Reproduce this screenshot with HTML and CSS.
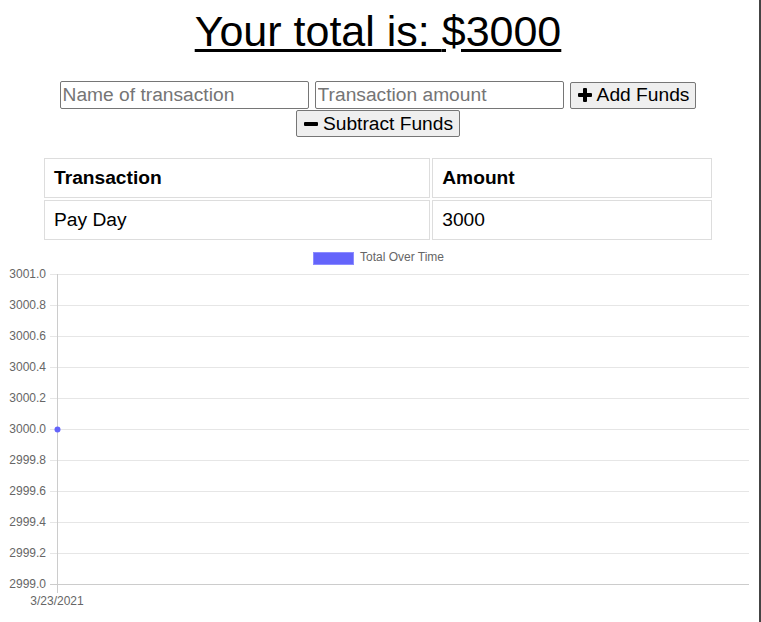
FILE: index.html
```html
<!DOCTYPE html>
<html lang="en">
<head>
<meta charset="utf-8">
<title>Budget Tracker</title>
<link rel="stylesheet" href="styles.css">
</head>
<body>
<h1 class="total"><span class="u">Your total is: </span><span class="dollar">$</span><span class="u">3000</span></h1>
<div class="form">
  <input class="field" type="text" placeholder="Name of transaction">
  <input class="field" type="number" placeholder="Transaction amount">
  <button class="btn" type="button"><svg class="icon" viewBox="0 0 16 16" aria-hidden="true"><rect x="6" y="1" width="4" height="14" rx="1"/><rect x="1" y="6" width="14" height="4" rx="1"/></svg>Add Funds</button>
  <button class="btn" type="button"><svg class="icon" viewBox="0 0 16 16" aria-hidden="true"><rect x="1" y="6" width="14" height="4" rx="1"/></svg>Subtract Funds</button>
</div>
<table class="ledger">
  <thead>
    <tr><th class="col-name">Transaction</th><th>Amount</th></tr>
  </thead>
  <tbody>
    <tr><td>Pay Day</td><td>3000</td></tr>
  </tbody>
</table>
<svg class="chart" width="744" height="372" viewBox="0 0 744 372">
  <g class="legend">
    <rect x="305.5" y="7.5" width="40" height="12" fill="#6464fb" stroke="#8c8cff"/>
    <text x="352" y="15.5" class="lbl">Total Over Time</text>
  </g>
  <g class="grid">
    <line x1="42" x2="742" y1="29.5" y2="29.5"/>
    <line x1="42" x2="742" y1="60.5" y2="60.5"/>
    <line x1="42" x2="742" y1="91.5" y2="91.5"/>
    <line x1="42" x2="742" y1="122.5" y2="122.5"/>
    <line x1="42" x2="742" y1="153.5" y2="153.5"/>
    <line x1="42" x2="742" y1="184.5" y2="184.5"/>
    <line x1="42" x2="742" y1="215.5" y2="215.5"/>
    <line x1="42" x2="742" y1="246.5" y2="246.5"/>
    <line x1="42" x2="742" y1="277.5" y2="277.5"/>
    <line x1="42" x2="742" y1="308.5" y2="308.5"/>
  </g>
  <line class="axis" x1="42" x2="742" y1="339.5" y2="339.5"/>
  <line class="axis" x1="49.5" x2="49.5" y1="29" y2="348"/>
  <g class="ylabels">
    <text x="38" y="33">3001.0</text>
    <text x="38" y="64">3000.8</text>
    <text x="38" y="95">3000.6</text>
    <text x="38" y="126">3000.4</text>
    <text x="38" y="157">3000.2</text>
    <text x="38" y="188">3000.0</text>
    <text x="38" y="219">2999.8</text>
    <text x="38" y="250">2999.6</text>
    <text x="38" y="281">2999.4</text>
    <text x="38" y="312">2999.2</text>
    <text x="38" y="343">2999.0</text>
  </g>
  <text x="49" y="360" class="lbl xlabel">3/23/2021</text>
  <circle cx="49.5" cy="184.5" r="3" fill="#6464fb"/>
</svg>
</body>
</html>
```
FILE: styles.css
```css
html {
  border-right: 2px solid #444;
  overflow: hidden;
  height: 100%;
  box-sizing: border-box;
}
body {
  margin: 0 10px 0 7px;
  font-family: "Liberation Sans", Arial, sans-serif;
  color: #000;
}
.total {
  margin: 7px 0 25px;
  font-size: 43px;
  line-height: 49px;
  font-weight: normal;
  text-align: center;
}
.total .u {
  text-decoration: underline;
  text-decoration-thickness: 3px;
  text-underline-offset: 3px;
}
.total .dollar {
  background-image: linear-gradient(#000, #000), linear-gradient(#000, #000);
  background-size: 4px 3px, 5px 3px;
  background-position: 0 42px, 100% 42px;
  background-repeat: no-repeat;
}
.form {
  display: flex;
  flex-wrap: wrap;
  justify-content: center;
  align-items: center;
  column-gap: 6px;
  row-gap: 1px;
}
.field {
  box-sizing: border-box;
  width: 249px;
  height: 28px;
  margin: 0;
  padding: 1px 2px;
  border: 1px solid #767676;
  border-radius: 2px;
  font-family: "Liberation Sans", Arial, sans-serif;
  font-size: 19.2px;
  color: #000;
  -moz-appearance: textfield;
}
.field::placeholder {
  color: #757575;
}
.field::-webkit-outer-spin-button,
.field::-webkit-inner-spin-button {
  -webkit-appearance: none;
  margin: 0;
}
.btn {
  box-sizing: border-box;
  height: 27px;
  margin: 0;
  padding: 0 6px;
  display: inline-flex;
  align-items: center;
  border: 1px solid #767676;
  border-radius: 2px;
  background: #efefef;
  font-family: "Liberation Sans", Arial, sans-serif;
  font-size: 19.2px;
  color: #000;
}
.icon {
  width: 16px;
  height: 16px;
  margin-right: 4px;
  fill: #000;
}
.ledger {
  width: 672px;
  margin: 19px auto 0;
  border-collapse: separate;
  border-spacing: 2px;
  font-size: 19.2px;
}
.ledger th,
.ledger td {
  border: 1px solid #ddd;
  padding: 8px 9px;
  text-align: left;
  line-height: 22px;
}
.ledger .col-name {
  width: 58%;
}
.chart {
  display: block;
  margin: 3px 0 0 1px;
  font-family: "Liberation Sans", Arial, sans-serif;
  font-size: 12px;
}
.chart .lbl {
  fill: #666;
}
.chart .xlabel {
  text-anchor: middle;
}
.chart .grid line {
  stroke: #e6e6e6;
  stroke-width: 1;
}
.chart .axis {
  stroke: #cccccc;
  stroke-width: 1;
}
.chart .ylabels text {
  fill: #666;
  text-anchor: end;
}
```
